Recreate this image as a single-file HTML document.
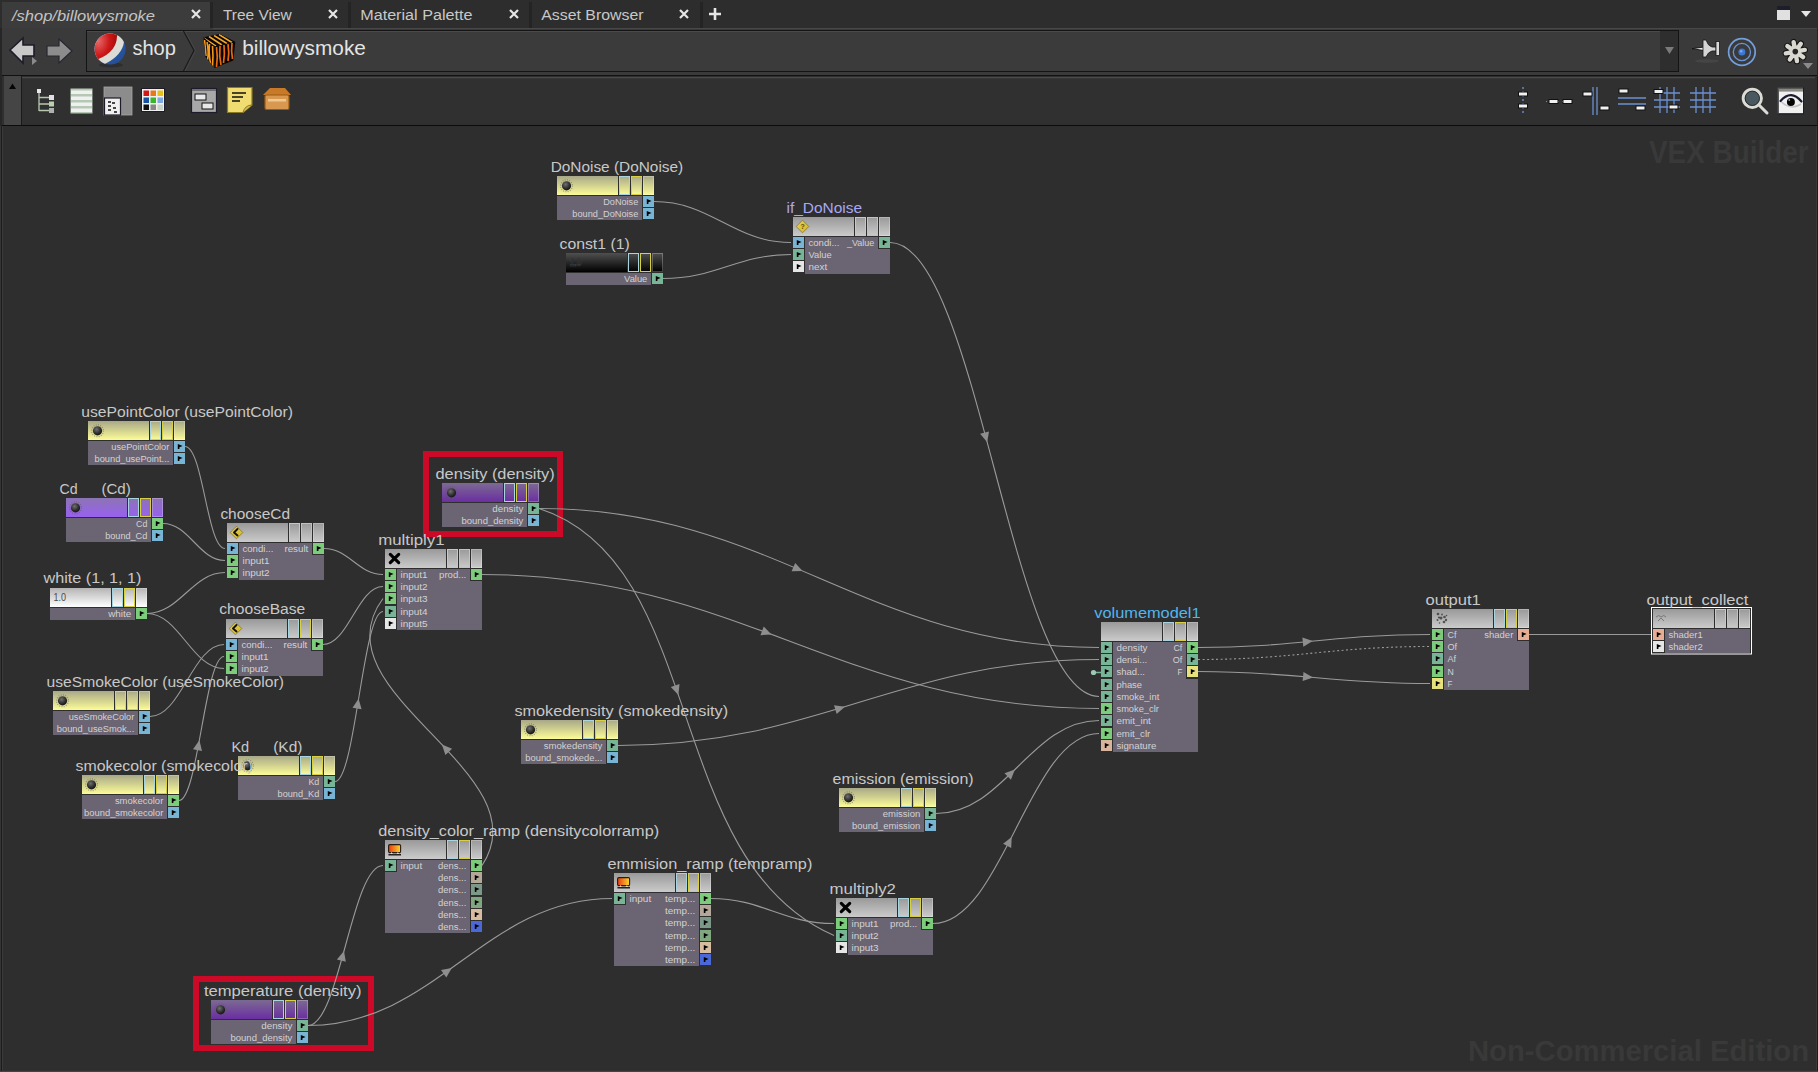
<!DOCTYPE html>
<html><head><meta charset="utf-8"><style>
html,body{margin:0;padding:0;background:#252525;overflow:hidden}
svg{display:block}
</style></head><body>
<svg width="1818" height="1072" viewBox="0 0 1818 1072">
<defs><linearGradient id="h_yellow" x1="0" y1="0" x2="0" y2="1"><stop offset="0" stop-color="#a8a888"/><stop offset="1" stop-color="#fcfc98"/></linearGradient><linearGradient id="h_gray" x1="0" y1="0" x2="0" y2="1"><stop offset="0" stop-color="#999999"/><stop offset="1" stop-color="#cbcbcb"/></linearGradient><linearGradient id="h_purple" x1="0" y1="0" x2="0" y2="1"><stop offset="0" stop-color="#8c74b4"/><stop offset="1" stop-color="#9860f0"/></linearGradient><linearGradient id="h_purple2" x1="0" y1="0" x2="0" y2="1"><stop offset="0" stop-color="#7c6a92"/><stop offset="1" stop-color="#6a2ea2"/></linearGradient><linearGradient id="h_white" x1="0" y1="0" x2="0" y2="1"><stop offset="0" stop-color="#b4b4b4"/><stop offset="1" stop-color="#ffffff"/></linearGradient><linearGradient id="h_black" x1="0" y1="0" x2="0" y2="1"><stop offset="0" stop-color="#505050"/><stop offset="1" stop-color="#000000"/></linearGradient><radialGradient id="gball" cx="0.4" cy="0.35" r="0.7"><stop offset="0" stop-color="#707070"/><stop offset="0.6" stop-color="#303030"/><stop offset="1" stop-color="#101010"/></radialGradient><linearGradient id="gramp" x1="0" y1="0" x2="1" y2="0"><stop offset="0" stop-color="#e83a10"/><stop offset="1" stop-color="#f8d830"/></linearGradient><linearGradient id="gdia" x1="0" y1="0" x2="1" y2="1"><stop offset="0" stop-color="#e0d060"/><stop offset="1" stop-color="#d8b818"/></linearGradient></defs>
<rect x="0" y="0" width="1818" height="1072" fill="#262626"/>
<rect x="0" y="0" width="1818" height="28" fill="#2d2d2d"/>
<rect x="2" y="2" width="208" height="26" fill="#3c3c3c"/>
<rect x="2" y="28" width="1815" height="47" fill="#3a3a3a"/>
<rect x="210" y="2" width="3" height="26" fill="#242424"/>
<rect x="348" y="2" width="3" height="26" fill="#242424"/>
<rect x="529" y="2" width="3" height="26" fill="#242424"/>
<rect x="700" y="2" width="3" height="26" fill="#242424"/>
<rect x="213" y="28" width="1604" height="1" fill="#484848"/>
<text x="12" y="21" textLength="143" lengthAdjust="spacingAndGlyphs" style="font-family:&quot;Liberation Sans&quot;,sans-serif;font-size:15px;font-style:italic" fill="#c4c4c4">/shop/billowysmoke</text>
<text x="222.9" y="20" textLength="68.8" lengthAdjust="spacingAndGlyphs" style="font-family:&quot;Liberation Sans&quot;,sans-serif;font-size:14px" fill="#c8c8c8">Tree View</text>
<text x="360.2" y="20" textLength="112.3" lengthAdjust="spacingAndGlyphs" style="font-family:&quot;Liberation Sans&quot;,sans-serif;font-size:14px" fill="#c8c8c8">Material Palette</text>
<text x="541.3" y="20" textLength="102.2" lengthAdjust="spacingAndGlyphs" style="font-family:&quot;Liberation Sans&quot;,sans-serif;font-size:14px" fill="#c8c8c8">Asset Browser</text>
<path d="M192,10 L200,18 M200,10 L192,18" stroke="#e6e6e6" stroke-width="2.2"/>
<path d="M329,10 L337,18 M337,10 L329,18" stroke="#e6e6e6" stroke-width="2.2"/>
<path d="M510,10 L518,18 M518,10 L510,18" stroke="#e6e6e6" stroke-width="2.2"/>
<path d="M680,10 L688,18 M688,10 L680,18" stroke="#e6e6e6" stroke-width="2.2"/>
<path d="M715,8 v12 M709,14 h12" stroke="#e6e6e6" stroke-width="2.6"/>
<rect x="1777" y="6" width="13" height="4" fill="#1e1e2a"/><rect x="1777" y="10" width="13" height="10" fill="#e0e0e0"/>
<path d="M1801,11 h10 l-5,6 Z" fill="#e6e6e6"/>
<path d="M10,50 L23,38 V45 H34 V56 H23 V63 Z" fill="#c8c8c8" stroke="#1c1c2a" stroke-width="1.6"/>
<path d="M32,57 l5,4 l-5,4 Z" fill="#8a8a8a"/>
<path d="M72,51 L59,39 V46 H47 V56 H59 V63 Z" fill="#8c8c8c" stroke="#262630" stroke-width="1.2"/>
<rect x="86.5" y="30.5" width="1592" height="41" fill="#3b3b3b" stroke="#141414" stroke-width="1"/>
<rect x="87" y="31" width="1591" height="1" fill="#4a4a4a"/>
<rect x="1660" y="31" width="18" height="40" fill="#2e2e2e"/>
<path d="M1665,47 h9 l-4.5,7 Z" fill="#7a7a7a"/>
<defs><clipPath id="cb"><circle cx="110.1" cy="49" r="15.5"/></clipPath><radialGradient id="gred" cx="0.3" cy="0.35" r="0.7"><stop offset="0" stop-color="#e86a6a"/><stop offset="0.6" stop-color="#cc1818"/><stop offset="1" stop-color="#a80c0c"/></radialGradient><linearGradient id="gblue" x1="0" y1="0" x2="1" y2="1"><stop offset="0" stop-color="#3a6ab8"/><stop offset="1" stop-color="#1e4890"/></linearGradient></defs>
<ellipse cx="111" cy="65" rx="12" ry="2.5" fill="#2e2e2e"/>
<g clip-path="url(#cb)"><rect x="94" y="33" width="33" height="33" fill="url(#gblue)"/><path d="M90,28 H124 V42 Q122.15,55 105.7,63.6 L90,70 Z" fill="#dcdcd6"/><path d="M90,28 H117 V36 Q116.8,51.45 99,58.7 L90,64 Z" fill="url(#gred)"/></g>
<text x="132.4" y="55" textLength="43.5" lengthAdjust="spacingAndGlyphs" style="font-family:&quot;Liberation Sans&quot;,sans-serif;font-size:21px" fill="#e4e4e4">shop</text>
<path d="M183.5,31 L194,50.5 L183.5,71" fill="none" stroke="#1a1a1a" stroke-width="1.2"/>
<path d="M185,31 L195.5,50.5 L185,71" fill="none" stroke="#4a4a4a" stroke-width="0.8"/>
<defs><clipPath id="ctl"><polygon points="203.5,37.3 214.1,46.5 214.5,68 205.5,57"/></clipPath><clipPath id="ctr"><polygon points="214.1,46.5 235.3,41.8 233.3,60.6 214.5,68"/></clipPath><clipPath id="ctt"><polygon points="203.5,37.3 220,33.9 235.3,41.8 214.1,46.5"/></clipPath></defs>
<polygon points="203.5,37.3 220,33.9 235.3,41.8 214.1,46.5" fill="#0a0604"/><polygon points="203.5,37.3 214.1,46.5 214.5,68 205.5,57" fill="#0a0604"/><polygon points="214.1,46.5 235.3,41.8 233.3,60.6 214.5,68" fill="#0a0604"/>
<g clip-path="url(#ctl)" stroke="#f49a1c" stroke-width="1.6" fill="none"><path d="M204.5,40 q1,8 1.5,16 M207,42 q2,10 0.5,18 M209.5,44 q-1,8 1,20 M212.5,46 q1,10 0,21"/></g>
<g clip-path="url(#ctr)" stroke="#e86a10" stroke-width="1.7" fill="none"><path d="M216.5,47 q1.5,10 0,20 M220,46 q-1,10 1,19 M224,45 q1,9 -0.5,18 M228,44 q1.5,9 0,17 M232,43 q-1,8 0.5,16"/></g>
<g clip-path="url(#ctt)" stroke="#f4a828" stroke-width="1.5" fill="none"><path d="M204,38 l12,8 M209,36.5 l13,8.5 M214,35.5 l13,8 M219,34.5 l13,8"/></g>
<text x="242.2" y="55" textLength="123.7" lengthAdjust="spacingAndGlyphs" style="font-family:&quot;Liberation Sans&quot;,sans-serif;font-size:21px" fill="#e4e4e4">billowysmoke</text>
<path d="M1692,48.7 L1704,47 L1704,50.5 Z" fill="#e8e8e8" stroke="#111" stroke-width="0.9" stroke-linejoin="round"/>
<path d="M1703,40 L1706,40 Q1708,46 1712,47 L1716,47 L1716,51 L1712,51 Q1708,52 1706,57 L1703,57 Z" fill="#d4d4d4" stroke="#181818" stroke-width="0.8"/>
<rect x="1716" y="41.5" width="3.5" height="14" fill="#dadada" stroke="#181818" stroke-width="0.8"/>
<ellipse cx="1707" cy="61" rx="12" ry="1.8" fill="#4a4a4a" opacity="0.7"/>
<circle cx="1741.9" cy="52" r="13.3" fill="none" stroke="#74a0dc" stroke-width="1.7"/>
<circle cx="1741.9" cy="52" r="8.6" fill="none" stroke="#6a94d4" stroke-width="1.3"/>
<circle cx="1741.9" cy="52" r="3.5" fill="#3a78d8"/><circle cx="1741.2" cy="51.2" r="1.3" fill="#7aa8f0"/>
<path d="M1795.3,51.6 L1793.6,42.1 M1795.3,51.6 L1800.8,43.7 M1795.3,51.6 L1804.8,49.9 M1795.3,51.6 L1803.2,57.1 M1795.3,51.6 L1797.0,61.1 M1795.3,51.6 L1789.8,59.5 M1795.3,51.6 L1785.8,53.3 M1795.3,51.6 L1787.4,46.1" stroke="#141414" stroke-width="6.4" stroke-linecap="round"/>
<circle cx="1795.3" cy="51.6" r="7.2" fill="#141414"/>
<path d="M1795.3,51.6 L1793.6,42.1 M1795.3,51.6 L1800.8,43.7 M1795.3,51.6 L1804.8,49.9 M1795.3,51.6 L1803.2,57.1 M1795.3,51.6 L1797.0,61.1 M1795.3,51.6 L1789.8,59.5 M1795.3,51.6 L1785.8,53.3 M1795.3,51.6 L1787.4,46.1" stroke="#d8d8d0" stroke-width="4.4" stroke-linecap="round"/>
<circle cx="1795.3" cy="51.6" r="6" fill="#d8d8d0"/>
<circle cx="1795.3" cy="51.6" r="2.8" fill="#262626"/>
<path d="M1803,63 h10 l-5,6 Z" fill="#8a8a8a"/>
<rect x="2" y="75" width="1815" height="1" fill="#111111"/>
<rect x="2" y="76" width="1815" height="49" fill="#2f2f2f"/>
<rect x="4" y="76" width="17" height="49" fill="#454545"/>
<rect x="21" y="76" width="1" height="49" fill="#1a1a1a"/>
<rect x="22" y="77" width="1793" height="1.5" fill="#4a4a4a"/>
<rect x="22" y="78.5" width="1793" height="46" fill="#303030"/>
<path d="M9,89 h7 l-3.5,-5.5 Z" fill="#050505"/>
<rect x="2" y="125" width="1815" height="1" fill="#0c0c0c"/>
<rect x="37" y="89" width="4" height="4" fill="#e8e8e8"/><path d="M39,93 V111 M39,97.5 H49 M39,104 H49 M39,110.5 H49" stroke="#b8c8b0" stroke-width="1.3"/>
<rect x="49" y="95" width="5" height="5" fill="#e0e0e0"/><rect x="49" y="101.5" width="5" height="5" fill="#b8d0b0"/><rect x="49" y="108" width="5" height="5" fill="#b0b0b0"/>
<rect x="70.5" y="88.5" width="22" height="25" fill="#b4c8b4"/>
<rect x="71" y="90.5" width="21" height="3.5" fill="#f0f0f0"/>
<rect x="71" y="96.5" width="21" height="3.5" fill="#f0f0f0"/>
<rect x="71" y="102.5" width="21" height="3.5" fill="#f0f0f0"/>
<rect x="71" y="108.5" width="21" height="3.5" fill="#f0f0f0"/>
<rect x="104" y="87" width="28" height="28" fill="#8c8c8c"/><rect x="104" y="87" width="28" height="28" fill="none" stroke="#a0a8a0" stroke-width="0.8"/>
<rect x="104.5" y="98" width="16" height="17" fill="#f0f0f0" stroke="#1c1c2a" stroke-width="1.2"/>
<path d="M108,102 h3 M112,103 h3 M108,106 h3 M113,108 h3 M108,110 h3 M114,112 h3" stroke="#101010" stroke-width="1.4"/>
<rect x="141.5" y="88.5" width="23" height="23" fill="#f0f0f0" stroke="#1c1c2a" stroke-width="1"/>
<rect x="143.5" y="90.5" width="5.5" height="5.5" fill="#d01818"/>
<rect x="150.5" y="90.5" width="5.5" height="5.5" fill="#e87818"/>
<rect x="157.5" y="90.5" width="5.5" height="5.5" fill="#e8c018"/>
<rect x="143.5" y="97.5" width="5.5" height="5.5" fill="#1850a0"/>
<rect x="150.5" y="97.5" width="5.5" height="5.5" fill="#38b828"/>
<rect x="157.5" y="97.5" width="5.5" height="5.5" fill="#80a8e0"/>
<rect x="143.5" y="104.5" width="5.5" height="5.5" fill="#101010"/>
<rect x="150.5" y="104.5" width="5.5" height="5.5" fill="#888888"/>
<rect x="157.5" y="104.5" width="5.5" height="5.5" fill="#c8d4c8"/>
<rect x="191.5" y="88.5" width="25" height="24" fill="#a8a8a8" stroke="#1c1c2a" stroke-width="1.2"/><rect x="192" y="89" width="24" height="2" fill="#707070"/>
<rect x="195" y="94" width="11" height="6" fill="#e8e8e8" stroke="#101010" stroke-width="1"/><rect x="202" y="103" width="11" height="6" fill="#e8e8e8" stroke="#101010" stroke-width="1"/>
<path d="M227.5,87.5 H252 V105 L243,112.5 H227.5 Z" fill="#f0dc70" stroke="#8a7a20" stroke-width="1.2"/>
<path d="M243,112.5 Q245,105 252,105" fill="#d8c050" stroke="#8a7a20" stroke-width="1"/>
<path d="M232,93 h14 M232,97 h11 M232,101 h8" stroke="#101010" stroke-width="1.6"/>
<path d="M263,95 L270,88 H285 L291,95 Z" fill="#c87a28"/><rect x="265" y="95" width="24" height="14.5" rx="1.5" fill="#d89850" stroke="#9a5a10" stroke-width="1.2"/>
<rect x="268" y="99" width="18" height="2.5" fill="#f0c890"/>
<path d="M1523,87 V115" stroke="#6a90d0" stroke-width="1.4" stroke-dasharray="2 2"/><rect x="1518.5" y="92" width="9" height="4" fill="#f0f0f0" stroke="#101010" stroke-width="1"/><rect x="1518.5" y="104" width="9" height="4" fill="#f0f0f0" stroke="#101010" stroke-width="1"/>
<path d="M1546,101.5 H1574" stroke="#6a90d0" stroke-width="1.2" stroke-dasharray="1 3"/><rect x="1549" y="99.5" width="9" height="4" fill="#f0f0f0" stroke="#101010" stroke-width="1"/><rect x="1563" y="99.5" width="9" height="4" fill="#f0f0f0" stroke="#101010" stroke-width="1"/>
<path d="M1593,87 V115 M1597,87 V115" stroke="#6a90d0" stroke-width="1.3"/><rect x="1583" y="92" width="9" height="4" fill="#f0f0f0" stroke="#101010" stroke-width="1"/><rect x="1600" y="106" width="9" height="4" fill="#f0f0f0" stroke="#101010" stroke-width="1"/>
<path d="M1618,98 H1646 M1618,104 H1646" stroke="#6a90d0" stroke-width="1.3"/><rect x="1619" y="89" width="9" height="4" fill="#f0f0f0" stroke="#101010" stroke-width="1"/><rect x="1636" y="106" width="9" height="4" fill="#f0f0f0" stroke="#101010" stroke-width="1"/>
<path d="M1660,87 V113 M1667,87 V113 M1674,87 V113 M1654,93 H1680 M1654,100 H1680 M1654,107 H1680" stroke="#6a90d0" stroke-width="1.3"/><rect x="1654" y="89.5" width="9" height="4" fill="#f0f0f0" stroke="#101010" stroke-width="1"/><rect x="1669" y="105" width="9" height="4" fill="#f0f0f0" stroke="#101010" stroke-width="1"/>
<path d="M1696,87 V113 M1703,87 V113 M1710,87 V113 M1690,93 H1716 M1690,100 H1716 M1690,107 H1716" stroke="#6a90d0" stroke-width="1.3"/>
<circle cx="1752.3" cy="98.3" r="9" fill="#4a5860" stroke="#dcdcd6" stroke-width="3.2"/><circle cx="1752.3" cy="98.3" r="7.2" fill="none" stroke="#1e1e1e" stroke-width="0.9"/>
<path d="M1759.5,105.5 L1767,113" stroke="#dcdcd6" stroke-width="3" stroke-linecap="round"/>
<rect x="1777.5" y="87.5" width="26.5" height="27" fill="#1c1c2a"/><rect x="1777.5" y="87.5" width="25.5" height="26" fill="#5a5a5a"/>
<rect x="1779" y="89" width="24" height="24" fill="#f0f0f0"/><rect x="1779" y="89" width="24" height="2.6" fill="#8a8a84"/>
<path d="M1781,101.5 Q1791,111 1801,104" fill="none" stroke="#c4c4c4" stroke-width="1.6"/>
<path d="M1780.5,101 Q1791,89 1801.5,101.5" fill="none" stroke="#1c1c30" stroke-width="2.2" stroke-linecap="round"/>
<circle cx="1790.9" cy="101.9" r="4" fill="#050505"/><circle cx="1789.3" cy="100" r="0.9" fill="#a0a0a0"/>
<rect x="0" y="126" width="1818" height="946" fill="#353535"/>
<rect x="1" y="126" width="1" height="945" fill="#1c1c1c"/>
<rect x="2" y="126" width="1" height="945" fill="#3a3a3a"/>
<rect x="1817" y="76" width="1" height="996" fill="#1c1c1c"/>
<rect x="1816" y="126" width="1" height="945" fill="#3a3a3a"/>
<rect x="0" y="1071" width="1818" height="1" fill="#444444"/>
<rect x="3" y="126" width="1813" height="944.5" fill="#2e2e2e"/>
<text x="1649" y="163" textLength="159.5" lengthAdjust="spacingAndGlyphs" style="font-family:&quot;Liberation Sans&quot;,sans-serif;font-size:31px;font-weight:bold" fill="#393939">VEX Builder</text>
<text x="1468" y="1060.5" textLength="341" lengthAdjust="spacingAndGlyphs" style="font-family:&quot;Liberation Sans&quot;,sans-serif;font-size:29px;font-weight:bold" fill="#393939">Non-Commercial Edition</text>
<rect x="426" y="454" width="134" height="80" fill="none" stroke="#cc0a28" stroke-width="6"/>
<rect x="196" y="979" width="175" height="69" fill="none" stroke="#cc0a28" stroke-width="6"/>
<path d="M654.0,201.5 C711.5,201.5 733.5,242.5 791.0,242.5" fill="none" stroke="#9a9a9a" stroke-width="1.1"/>
<path d="M663.0,278.5 C716.8,278.5 737.2,254.5 791.0,254.5" fill="none" stroke="#9a9a9a" stroke-width="1.1"/>
<path d="M890.0,242.5 C977.8,242.5 1011.2,696.5 1099.0,696.5" fill="none" stroke="#9a9a9a" stroke-width="1.1"/>
<path d="M987.2,442.2 L980.1,433.8 L989.0,431.4 Z" fill="#8e8e8e"/>
<path d="M185.0,446.5 C203.0,446.5 207.0,548.5 225.0,548.5" fill="none" stroke="#9a9a9a" stroke-width="1.1"/>
<path d="M163.0,523.5 C189.0,523.5 199.0,560.5 225.0,560.5" fill="none" stroke="#9a9a9a" stroke-width="1.1"/>
<path d="M147.0,613.5 C179.8,613.5 192.2,572.5 225.0,572.5" fill="none" stroke="#9a9a9a" stroke-width="1.1"/>
<path d="M147.0,613.5 C179.3,613.5 191.7,668.5 224.0,668.5" fill="none" stroke="#9a9a9a" stroke-width="1.1"/>
<path d="M150.0,716.5 C181.1,716.5 192.9,644.5 224.0,644.5" fill="none" stroke="#9a9a9a" stroke-width="1.1"/>
<path d="M179.0,800.5 C197.9,800.5 205.1,656.5 224.0,656.5" fill="none" stroke="#9a9a9a" stroke-width="1.1"/>
<path d="M199.4,740.2 L202.0,750.9 L193.0,749.2 Z" fill="#8e8e8e"/>
<path d="M324.0,548.5 C348.8,548.5 358.2,574.5 383.0,574.5" fill="none" stroke="#9a9a9a" stroke-width="1.1"/>
<path d="M323.0,644.5 C348.2,644.5 357.8,586.5 383.0,586.5" fill="none" stroke="#9a9a9a" stroke-width="1.1"/>
<path d="M335.0,781.5 C355.2,781.5 362.8,611.5 383.0,611.5" fill="none" stroke="#9a9a9a" stroke-width="1.1"/>
<path d="M358.6,698.7 L361.6,709.3 L352.5,707.8 Z" fill="#8e8e8e"/>
<path d="M482.0,865.5 C545.0,771.5 313.0,692.5 383.0,598.5" fill="none" stroke="#9a9a9a" stroke-width="1.1"/>
<path d="M441.9,744.6 L452.1,748.8 L445.4,755.0 Z" fill="#8e8e8e"/>
<path d="M482.0,574.5 C741.1,574.5 839.9,708.5 1099.0,708.5" fill="none" stroke="#9a9a9a" stroke-width="1.1"/>
<path d="M771.5,634.4 L760.5,635.2 L763.7,626.6 Z" fill="#8e8e8e"/>
<path d="M539.0,508.5 C774.2,508.5 863.8,647.5 1099.0,647.5" fill="none" stroke="#9a9a9a" stroke-width="1.1"/>
<path d="M802.6,571.0 L791.6,571.3 L795.2,562.9 Z" fill="#8e8e8e"/>
<path d="M539.0,508.5 C708.0,562.5 661.0,860.5 834.0,935.5" fill="none" stroke="#9a9a9a" stroke-width="1.1"/>
<path d="M678.4,695.0 L670.8,687.0 L679.5,684.0 Z" fill="#8e8e8e"/>
<path d="M618.0,745.5 C820.0,745.5 897.0,659.5 1099.0,659.5" fill="none" stroke="#9a9a9a" stroke-width="1.1"/>
<path d="M844.9,706.7 L836.7,714.0 L834.0,705.2 Z" fill="#8e8e8e"/>
<path d="M308.0,1025.5 C339.5,1025.5 351.5,865.5 383.0,865.5" fill="none" stroke="#9a9a9a" stroke-width="1.1"/>
<path d="M344.0,951.0 L345.8,961.8 L336.9,959.4 Z" fill="#8e8e8e"/>
<path d="M308.0,1025.5 C435.7,1025.5 484.3,898.5 612.0,898.5" fill="none" stroke="#9a9a9a" stroke-width="1.1"/>
<path d="M451.8,967.9 L446.3,977.5 L441.0,970.0 Z" fill="#8e8e8e"/>
<path d="M711.0,898.5 C762.7,898.5 782.3,923.5 834.0,923.5" fill="none" stroke="#9a9a9a" stroke-width="1.1"/>
<path d="M933.0,923.5 C1002.7,923.5 1029.3,733.5 1099.0,733.5" fill="none" stroke="#9a9a9a" stroke-width="1.1"/>
<path d="M1011.7,837.0 L1011.2,848.0 L1003.1,843.8 Z" fill="#8e8e8e"/>
<path d="M936.0,813.5 C1004.5,813.5 1030.5,720.5 1099.0,720.5" fill="none" stroke="#9a9a9a" stroke-width="1.1"/>
<path d="M1014.9,769.6 L1010.9,779.8 L1004.5,773.2 Z" fill="#8e8e8e"/>
<path d="M1198.0,647.5 C1295.4,647.5 1332.6,634.5 1430.0,634.5" fill="none" stroke="#9a9a9a" stroke-width="1.1"/>
<path d="M1312.8,641.1 L1303.3,646.7 L1302.4,637.5 Z" fill="#8e8e8e"/>
<path d="M1198.0,659.5 C1295.4,659.5 1332.6,646.5 1430.0,646.5" fill="none" stroke="#9a9a9a" stroke-width="1.1" stroke-dasharray="2 2.5"/>
<path d="M1198.0,671.5 C1295.4,671.5 1332.6,683.5 1430.0,683.5" fill="none" stroke="#9a9a9a" stroke-width="1.1"/>
<path d="M1313.0,677.4 L1302.6,681.1 L1303.5,671.9 Z" fill="#8e8e8e"/>
<path d="M1529.0,634.5 C1580.2,634.5 1599.8,634.5 1651.0,634.5" fill="none" stroke="#9a9a9a" stroke-width="1.1"/>
<rect x="557" y="176" width="61" height="19" fill="url(#h_yellow)"/>
<rect x="619" y="176" width="11" height="19" fill="url(#h_yellow)"/>
<rect x="619.5" y="176.5" width="10" height="18" fill="none" stroke="#a8d4e0" stroke-width="1"/>
<rect x="631" y="176" width="11" height="19" fill="url(#h_yellow)"/>
<rect x="631.5" y="176.5" width="10" height="18" fill="none" stroke="#d8d040" stroke-width="1"/>
<rect x="643" y="176" width="11" height="19" fill="url(#h_yellow)"/>
<rect x="643.5" y="176.5" width="10" height="18" fill="none" stroke="#ffffff" stroke-opacity="0.25" stroke-width="1"/>
<g><circle cx="566.5" cy="185.8" r="5.9" fill="none" stroke="#5a5a50" stroke-width="1.2" stroke-dasharray="0.9 1.4" opacity="0.55"/><circle cx="566.5" cy="185.8" r="4.6" fill="url(#gball)"/></g>
<rect x="557" y="196" width="85" height="12" fill="#6b6573"/>
<rect x="643" y="196" width="11" height="11" fill="#78b4d4"/><path d="M646.8,199 L651.6,200.9 L648.4,202.3 L648.4,204 L646.8,204 Z" fill="#000"/>
<text x="603.2" y="204.6" textLength="35.1" lengthAdjust="spacingAndGlyphs" style="font-family:&quot;Liberation Sans&quot;,sans-serif;font-size:9.6px" fill="#d2d2d2">DoNoise</text>
<rect x="557" y="208" width="85" height="12" fill="#6b6573"/>
<rect x="643" y="208" width="11" height="11" fill="#78b4d4"/><path d="M646.8,211 L651.6,212.9 L648.4,214.3 L648.4,216 L646.8,216 Z" fill="#000"/>
<text x="572.3" y="216.6" textLength="66.0" lengthAdjust="spacingAndGlyphs" style="font-family:&quot;Liberation Sans&quot;,sans-serif;font-size:9.6px" fill="#d2d2d2">bound_DoNoise</text>
<rect x="566" y="253" width="61" height="19" fill="url(#h_black)"/>
<rect x="628" y="253" width="11" height="19" fill="url(#h_black)"/>
<rect x="628.5" y="253.5" width="10" height="18" fill="none" stroke="#a8d4e0" stroke-width="1"/>
<rect x="640" y="253" width="11" height="19" fill="url(#h_black)"/>
<rect x="640.5" y="253.5" width="10" height="18" fill="none" stroke="#d8d040" stroke-width="1"/>
<rect x="652" y="253" width="11" height="19" fill="url(#h_black)"/>
<rect x="652.5" y="253.5" width="10" height="18" fill="none" stroke="#ffffff" stroke-opacity="0.25" stroke-width="1"/>
<text x="569.5" y="266" textLength="12" lengthAdjust="spacingAndGlyphs" style="font-family:&quot;Liberation Sans&quot;,sans-serif;font-size:10.5px;font-weight:bold" fill="#1a1a1a" stroke="#4a4a4a" stroke-width="0.5">1.0</text>
<rect x="566" y="273" width="85" height="12" fill="#6b6573"/>
<rect x="652" y="273" width="11" height="11" fill="#78b496"/><path d="M655.8,276 L660.6,277.9 L657.4,279.3 L657.4,281 L655.8,281 Z" fill="#000"/>
<text x="624.1" y="281.6" textLength="23.2" lengthAdjust="spacingAndGlyphs" style="font-family:&quot;Liberation Sans&quot;,sans-serif;font-size:9.6px" fill="#d2d2d2">Value</text>
<rect x="793" y="217" width="61" height="19" fill="url(#h_gray)"/>
<rect x="855" y="217" width="11" height="19" fill="url(#h_gray)"/>
<rect x="855.5" y="217.5" width="10" height="18" fill="none" stroke="#a8d4e0" stroke-width="1"/>
<rect x="867" y="217" width="11" height="19" fill="url(#h_gray)"/>
<rect x="867.5" y="217.5" width="10" height="18" fill="none" stroke="#d8d040" stroke-width="1"/>
<rect x="879" y="217" width="11" height="19" fill="url(#h_gray)"/>
<rect x="879.5" y="217.5" width="10" height="18" fill="none" stroke="#ffffff" stroke-opacity="0.25" stroke-width="1"/>
<path d="M802.5,220.2 L808.8,226.5 L802.5,232.8 L796.2,226.5 Z" fill="url(#gdia)" stroke="#7a6a30" stroke-width="0.7" stroke-linejoin="round"/><text x="800.5" y="229.0" style="font-family:&quot;Liberation Sans&quot;,sans-serif;font-size:7px;font-weight:bold" fill="#5a4a10">?</text>
<rect x="805" y="237" width="73" height="12" fill="#6b6573"/>
<rect x="793" y="237" width="11" height="11" fill="#78b4d4"/><path d="M796.8,240 L801.6,241.9 L798.4,243.3 L798.4,245 L796.8,245 Z" fill="#000"/>
<text x="808.5" y="245.6" textLength="30.9" lengthAdjust="spacingAndGlyphs" style="font-family:&quot;Liberation Sans&quot;,sans-serif;font-size:9.6px" fill="#d2d2d2">condi...</text>
<rect x="879" y="237" width="11" height="11" fill="#78b496"/><path d="M882.8,240 L887.6,241.9 L884.4,243.3 L884.4,245 L882.8,245 Z" fill="#000"/>
<text x="846.9" y="245.6" textLength="27.4" lengthAdjust="spacingAndGlyphs" style="font-family:&quot;Liberation Sans&quot;,sans-serif;font-size:9.6px" fill="#d2d2d2">_Value</text>
<rect x="805" y="249" width="85" height="12" fill="#6b6573"/>
<rect x="793" y="249" width="11" height="11" fill="#78b496"/><path d="M796.8,252 L801.6,253.9 L798.4,255.3 L798.4,257 L796.8,257 Z" fill="#000"/>
<text x="808.5" y="257.6" textLength="23.2" lengthAdjust="spacingAndGlyphs" style="font-family:&quot;Liberation Sans&quot;,sans-serif;font-size:9.6px" fill="#d2d2d2">Value</text>
<rect x="805" y="261" width="85" height="13" fill="#6b6573"/>
<rect x="793" y="261" width="11" height="11" fill="#e6e6e6"/><path d="M796.8,264 L801.6,265.9 L798.4,267.3 L798.4,269 L796.8,269 Z" fill="#000"/>
<text x="808.5" y="269.6" textLength="18.7" lengthAdjust="spacingAndGlyphs" style="font-family:&quot;Liberation Sans&quot;,sans-serif;font-size:9.6px" fill="#d2d2d2">next</text>
<rect x="88" y="421" width="61" height="19" fill="url(#h_yellow)"/>
<rect x="150" y="421" width="11" height="19" fill="url(#h_yellow)"/>
<rect x="150.5" y="421.5" width="10" height="18" fill="none" stroke="#a8d4e0" stroke-width="1"/>
<rect x="162" y="421" width="11" height="19" fill="url(#h_yellow)"/>
<rect x="162.5" y="421.5" width="10" height="18" fill="none" stroke="#d8d040" stroke-width="1"/>
<rect x="174" y="421" width="11" height="19" fill="url(#h_yellow)"/>
<rect x="174.5" y="421.5" width="10" height="18" fill="none" stroke="#ffffff" stroke-opacity="0.25" stroke-width="1"/>
<g><circle cx="97.5" cy="430.8" r="5.9" fill="none" stroke="#5a5a50" stroke-width="1.2" stroke-dasharray="0.9 1.4" opacity="0.55"/><circle cx="97.5" cy="430.8" r="4.6" fill="url(#gball)"/></g>
<rect x="88" y="441" width="85" height="12" fill="#6b6573"/>
<rect x="174" y="441" width="11" height="11" fill="#78b4d4"/><path d="M177.8,444 L182.6,445.9 L179.4,447.3 L179.4,449 L177.8,449 Z" fill="#000"/>
<text x="111.3" y="449.6" textLength="58.0" lengthAdjust="spacingAndGlyphs" style="font-family:&quot;Liberation Sans&quot;,sans-serif;font-size:9.6px" fill="#d2d2d2">usePointColor</text>
<rect x="88" y="453" width="85" height="12" fill="#6b6573"/>
<rect x="174" y="453" width="11" height="11" fill="#78b4d4"/><path d="M177.8,456 L182.6,457.9 L179.4,459.3 L179.4,461 L177.8,461 Z" fill="#000"/>
<text x="94.5" y="461.6" textLength="74.8" lengthAdjust="spacingAndGlyphs" style="font-family:&quot;Liberation Sans&quot;,sans-serif;font-size:9.6px" fill="#d2d2d2">bound_usePoint...</text>
<rect x="66" y="498" width="61" height="19" fill="url(#h_purple)"/>
<rect x="128" y="498" width="11" height="19" fill="url(#h_purple)"/>
<rect x="128.5" y="498.5" width="10" height="18" fill="none" stroke="#a8d4e0" stroke-width="1"/>
<rect x="140" y="498" width="11" height="19" fill="url(#h_purple)"/>
<rect x="140.5" y="498.5" width="10" height="18" fill="none" stroke="#d8d040" stroke-width="1"/>
<rect x="152" y="498" width="11" height="19" fill="url(#h_purple)"/>
<rect x="152.5" y="498.5" width="10" height="18" fill="none" stroke="#ffffff" stroke-opacity="0.25" stroke-width="1"/>
<g><circle cx="75.5" cy="507.8" r="5.9" fill="none" stroke="#5a5a50" stroke-width="1.2" stroke-dasharray="0.9 1.4" opacity="0.55"/><circle cx="75.5" cy="507.8" r="4.6" fill="url(#gball)"/></g>
<rect x="66" y="518" width="85" height="12" fill="#6b6573"/>
<rect x="152" y="518" width="11" height="11" fill="#7ccc7c"/><path d="M155.8,521 L160.6,522.9 L157.4,524.3 L157.4,526 L155.8,526 Z" fill="#000"/>
<text x="136.0" y="526.6" textLength="11.3" lengthAdjust="spacingAndGlyphs" style="font-family:&quot;Liberation Sans&quot;,sans-serif;font-size:9.6px" fill="#d2d2d2">Cd</text>
<rect x="66" y="530" width="85" height="12" fill="#6b6573"/>
<rect x="152" y="530" width="11" height="11" fill="#78b4d4"/><path d="M155.8,533 L160.6,534.9 L157.4,536.3 L157.4,538 L155.8,538 Z" fill="#000"/>
<text x="105.2" y="538.6" textLength="42.1" lengthAdjust="spacingAndGlyphs" style="font-family:&quot;Liberation Sans&quot;,sans-serif;font-size:9.6px" fill="#d2d2d2">bound_Cd</text>
<rect x="227" y="523" width="61" height="19" fill="url(#h_gray)"/>
<rect x="289" y="523" width="11" height="19" fill="url(#h_gray)"/>
<rect x="289.5" y="523.5" width="10" height="18" fill="none" stroke="#a8d4e0" stroke-width="1"/>
<rect x="301" y="523" width="11" height="19" fill="url(#h_gray)"/>
<rect x="301.5" y="523.5" width="10" height="18" fill="none" stroke="#d8d040" stroke-width="1"/>
<rect x="313" y="523" width="11" height="19" fill="url(#h_gray)"/>
<rect x="313.5" y="523.5" width="10" height="18" fill="none" stroke="#ffffff" stroke-opacity="0.25" stroke-width="1"/>
<path d="M236.5,526.2 L242.8,532.5 L236.5,538.8 L230.2,532.5 Z" fill="url(#gdia)" stroke="#7a6a30" stroke-width="0.7" stroke-linejoin="round"/><path d="M237.5,529.0 L234.0,532.5 L237.5,535.5" fill="none" stroke="#111" stroke-width="1.9" stroke-linecap="round" stroke-linejoin="round"/>
<rect x="239" y="543" width="73" height="12" fill="#6b6573"/>
<rect x="227" y="543" width="11" height="11" fill="#78b4d4"/><path d="M230.8,546 L235.6,547.9 L232.4,549.3 L232.4,551 L230.8,551 Z" fill="#000"/>
<text x="242.5" y="551.6" textLength="30.9" lengthAdjust="spacingAndGlyphs" style="font-family:&quot;Liberation Sans&quot;,sans-serif;font-size:9.6px" fill="#d2d2d2">condi...</text>
<rect x="313" y="543" width="11" height="11" fill="#7ccc7c"/><path d="M316.8,546 L321.6,547.9 L318.4,549.3 L318.4,551 L316.8,551 Z" fill="#000"/>
<text x="284.4" y="551.6" textLength="23.9" lengthAdjust="spacingAndGlyphs" style="font-family:&quot;Liberation Sans&quot;,sans-serif;font-size:9.6px" fill="#d2d2d2">result</text>
<rect x="239" y="555" width="85" height="12" fill="#6b6573"/>
<rect x="227" y="555" width="11" height="11" fill="#7ccc7c"/><path d="M230.8,558 L235.6,559.9 L232.4,561.3 L232.4,563 L230.8,563 Z" fill="#000"/>
<text x="242.5" y="563.6" textLength="27.1" lengthAdjust="spacingAndGlyphs" style="font-family:&quot;Liberation Sans&quot;,sans-serif;font-size:9.6px" fill="#d2d2d2">input1</text>
<rect x="239" y="567" width="85" height="13" fill="#6b6573"/>
<rect x="227" y="567" width="11" height="11" fill="#7ccc7c"/><path d="M230.8,570 L235.6,571.9 L232.4,573.3 L232.4,575 L230.8,575 Z" fill="#000"/>
<text x="242.5" y="575.6" textLength="27.1" lengthAdjust="spacingAndGlyphs" style="font-family:&quot;Liberation Sans&quot;,sans-serif;font-size:9.6px" fill="#d2d2d2">input2</text>
<rect x="50" y="588" width="61" height="19" fill="url(#h_white)"/>
<rect x="112" y="588" width="11" height="19" fill="url(#h_white)"/>
<rect x="112.5" y="588.5" width="10" height="18" fill="none" stroke="#a8d4e0" stroke-width="1"/>
<rect x="124" y="588" width="11" height="19" fill="url(#h_white)"/>
<rect x="124.5" y="588.5" width="10" height="18" fill="none" stroke="#d8d040" stroke-width="1"/>
<rect x="136" y="588" width="11" height="19" fill="url(#h_white)"/>
<rect x="136.5" y="588.5" width="10" height="18" fill="none" stroke="#ffffff" stroke-opacity="0.25" stroke-width="1"/>
<text x="53.5" y="601" textLength="12.5" lengthAdjust="spacingAndGlyphs" style="font-family:&quot;Liberation Sans&quot;,sans-serif;font-size:11px" fill="#4a4a4a">1.0</text>
<rect x="50" y="608" width="85" height="12" fill="#6b6573"/>
<rect x="136" y="608" width="11" height="11" fill="#7ccc7c"/><path d="M139.8,611 L144.6,612.9 L141.4,614.3 L141.4,616 L139.8,616 Z" fill="#000"/>
<text x="108.2" y="616.6" textLength="23.1" lengthAdjust="spacingAndGlyphs" style="font-family:&quot;Liberation Sans&quot;,sans-serif;font-size:9.6px" fill="#d2d2d2">white</text>
<rect x="226" y="619" width="61" height="19" fill="url(#h_gray)"/>
<rect x="288" y="619" width="11" height="19" fill="url(#h_gray)"/>
<rect x="288.5" y="619.5" width="10" height="18" fill="none" stroke="#a8d4e0" stroke-width="1"/>
<rect x="300" y="619" width="11" height="19" fill="url(#h_gray)"/>
<rect x="300.5" y="619.5" width="10" height="18" fill="none" stroke="#d8d040" stroke-width="1"/>
<rect x="312" y="619" width="11" height="19" fill="url(#h_gray)"/>
<rect x="312.5" y="619.5" width="10" height="18" fill="none" stroke="#ffffff" stroke-opacity="0.25" stroke-width="1"/>
<path d="M235.5,622.2 L241.8,628.5 L235.5,634.8 L229.2,628.5 Z" fill="url(#gdia)" stroke="#7a6a30" stroke-width="0.7" stroke-linejoin="round"/><path d="M236.5,625.0 L233.0,628.5 L236.5,631.5" fill="none" stroke="#111" stroke-width="1.9" stroke-linecap="round" stroke-linejoin="round"/>
<rect x="238" y="639" width="73" height="12" fill="#6b6573"/>
<rect x="226" y="639" width="11" height="11" fill="#78b4d4"/><path d="M229.8,642 L234.6,643.9 L231.4,645.3 L231.4,647 L229.8,647 Z" fill="#000"/>
<text x="241.5" y="647.6" textLength="30.9" lengthAdjust="spacingAndGlyphs" style="font-family:&quot;Liberation Sans&quot;,sans-serif;font-size:9.6px" fill="#d2d2d2">condi...</text>
<rect x="312" y="639" width="11" height="11" fill="#7ccc7c"/><path d="M315.8,642 L320.6,643.9 L317.4,645.3 L317.4,647 L315.8,647 Z" fill="#000"/>
<text x="283.4" y="647.6" textLength="23.9" lengthAdjust="spacingAndGlyphs" style="font-family:&quot;Liberation Sans&quot;,sans-serif;font-size:9.6px" fill="#d2d2d2">result</text>
<rect x="238" y="651" width="85" height="12" fill="#6b6573"/>
<rect x="226" y="651" width="11" height="11" fill="#7ccc7c"/><path d="M229.8,654 L234.6,655.9 L231.4,657.3 L231.4,659 L229.8,659 Z" fill="#000"/>
<text x="241.5" y="659.6" textLength="27.1" lengthAdjust="spacingAndGlyphs" style="font-family:&quot;Liberation Sans&quot;,sans-serif;font-size:9.6px" fill="#d2d2d2">input1</text>
<rect x="238" y="663" width="85" height="13" fill="#6b6573"/>
<rect x="226" y="663" width="11" height="11" fill="#7ccc7c"/><path d="M229.8,666 L234.6,667.9 L231.4,669.3 L231.4,671 L229.8,671 Z" fill="#000"/>
<text x="241.5" y="671.6" textLength="27.1" lengthAdjust="spacingAndGlyphs" style="font-family:&quot;Liberation Sans&quot;,sans-serif;font-size:9.6px" fill="#d2d2d2">input2</text>
<rect x="53" y="691" width="61" height="19" fill="url(#h_yellow)"/>
<rect x="115" y="691" width="11" height="19" fill="url(#h_yellow)"/>
<rect x="115.5" y="691.5" width="10" height="18" fill="none" stroke="#a8d4e0" stroke-width="1"/>
<rect x="127" y="691" width="11" height="19" fill="url(#h_yellow)"/>
<rect x="127.5" y="691.5" width="10" height="18" fill="none" stroke="#d8d040" stroke-width="1"/>
<rect x="139" y="691" width="11" height="19" fill="url(#h_yellow)"/>
<rect x="139.5" y="691.5" width="10" height="18" fill="none" stroke="#ffffff" stroke-opacity="0.25" stroke-width="1"/>
<g><circle cx="62.5" cy="700.8" r="5.9" fill="none" stroke="#5a5a50" stroke-width="1.2" stroke-dasharray="0.9 1.4" opacity="0.55"/><circle cx="62.5" cy="700.8" r="4.6" fill="url(#gball)"/></g>
<rect x="53" y="711" width="85" height="12" fill="#6b6573"/>
<rect x="139" y="711" width="11" height="11" fill="#78b4d4"/><path d="M142.8,714 L147.6,715.9 L144.4,717.3 L144.4,719 L142.8,719 Z" fill="#000"/>
<text x="68.7" y="719.6" textLength="65.6" lengthAdjust="spacingAndGlyphs" style="font-family:&quot;Liberation Sans&quot;,sans-serif;font-size:9.6px" fill="#d2d2d2">useSmokeColor</text>
<rect x="53" y="723" width="85" height="12" fill="#6b6573"/>
<rect x="139" y="723" width="11" height="11" fill="#78b4d4"/><path d="M142.8,726 L147.6,727.9 L144.4,729.3 L144.4,731 L142.8,731 Z" fill="#000"/>
<text x="56.8" y="731.6" textLength="77.5" lengthAdjust="spacingAndGlyphs" style="font-family:&quot;Liberation Sans&quot;,sans-serif;font-size:9.6px" fill="#d2d2d2">bound_useSmok...</text>
<rect x="82" y="775" width="61" height="19" fill="url(#h_yellow)"/>
<rect x="144" y="775" width="11" height="19" fill="url(#h_yellow)"/>
<rect x="144.5" y="775.5" width="10" height="18" fill="none" stroke="#a8d4e0" stroke-width="1"/>
<rect x="156" y="775" width="11" height="19" fill="url(#h_yellow)"/>
<rect x="156.5" y="775.5" width="10" height="18" fill="none" stroke="#d8d040" stroke-width="1"/>
<rect x="168" y="775" width="11" height="19" fill="url(#h_yellow)"/>
<rect x="168.5" y="775.5" width="10" height="18" fill="none" stroke="#ffffff" stroke-opacity="0.25" stroke-width="1"/>
<g><circle cx="91.5" cy="784.8" r="5.9" fill="none" stroke="#5a5a50" stroke-width="1.2" stroke-dasharray="0.9 1.4" opacity="0.55"/><circle cx="91.5" cy="784.8" r="4.6" fill="url(#gball)"/></g>
<rect x="82" y="795" width="85" height="12" fill="#6b6573"/>
<rect x="168" y="795" width="11" height="11" fill="#7ccc7c"/><path d="M171.8,798 L176.6,799.9 L173.4,801.3 L173.4,803 L171.8,803 Z" fill="#000"/>
<text x="114.9" y="803.6" textLength="48.4" lengthAdjust="spacingAndGlyphs" style="font-family:&quot;Liberation Sans&quot;,sans-serif;font-size:9.6px" fill="#d2d2d2">smokecolor</text>
<rect x="82" y="807" width="85" height="12" fill="#6b6573"/>
<rect x="168" y="807" width="11" height="11" fill="#78b4d4"/><path d="M171.8,810 L176.6,811.9 L173.4,813.3 L173.4,815 L171.8,815 Z" fill="#000"/>
<text x="84.1" y="815.6" textLength="79.2" lengthAdjust="spacingAndGlyphs" style="font-family:&quot;Liberation Sans&quot;,sans-serif;font-size:9.6px" fill="#d2d2d2">bound_smokecolor</text>
<rect x="238" y="756" width="61" height="19" fill="url(#h_yellow)"/>
<rect x="300" y="756" width="11" height="19" fill="url(#h_yellow)"/>
<rect x="300.5" y="756.5" width="10" height="18" fill="none" stroke="#a8d4e0" stroke-width="1"/>
<rect x="312" y="756" width="11" height="19" fill="url(#h_yellow)"/>
<rect x="312.5" y="756.5" width="10" height="18" fill="none" stroke="#d8d040" stroke-width="1"/>
<rect x="324" y="756" width="11" height="19" fill="url(#h_yellow)"/>
<rect x="324.5" y="756.5" width="10" height="18" fill="none" stroke="#ffffff" stroke-opacity="0.25" stroke-width="1"/>
<g><circle cx="247.5" cy="765.8" r="5.9" fill="none" stroke="#5a5a50" stroke-width="1.2" stroke-dasharray="0.9 1.4" opacity="0.55"/><circle cx="247.5" cy="765.8" r="4.6" fill="url(#gball)"/></g>
<rect x="238" y="776" width="85" height="12" fill="#6b6573"/>
<rect x="324" y="776" width="11" height="11" fill="#78b496"/><path d="M327.8,779 L332.6,780.9 L329.4,782.3 L329.4,784 L327.8,784 Z" fill="#000"/>
<text x="308.4" y="784.6" textLength="10.9" lengthAdjust="spacingAndGlyphs" style="font-family:&quot;Liberation Sans&quot;,sans-serif;font-size:9.6px" fill="#d2d2d2">Kd</text>
<rect x="238" y="788" width="85" height="12" fill="#6b6573"/>
<rect x="324" y="788" width="11" height="11" fill="#78b4d4"/><path d="M327.8,791 L332.6,792.9 L329.4,794.3 L329.4,796 L327.8,796 Z" fill="#000"/>
<text x="277.6" y="796.6" textLength="41.7" lengthAdjust="spacingAndGlyphs" style="font-family:&quot;Liberation Sans&quot;,sans-serif;font-size:9.6px" fill="#d2d2d2">bound_Kd</text>
<rect x="442" y="483" width="61" height="19" fill="url(#h_purple2)"/>
<rect x="504" y="483" width="11" height="19" fill="url(#h_purple2)"/>
<rect x="504.5" y="483.5" width="10" height="18" fill="none" stroke="#a8d4e0" stroke-width="1"/>
<rect x="516" y="483" width="11" height="19" fill="url(#h_purple2)"/>
<rect x="516.5" y="483.5" width="10" height="18" fill="none" stroke="#d8d040" stroke-width="1"/>
<rect x="528" y="483" width="11" height="19" fill="url(#h_purple2)"/>
<rect x="528.5" y="483.5" width="10" height="18" fill="none" stroke="#ffffff" stroke-opacity="0.25" stroke-width="1"/>
<g><circle cx="451.5" cy="492.8" r="5.9" fill="none" stroke="#5a5a50" stroke-width="1.2" stroke-dasharray="0.9 1.4" opacity="0.55"/><circle cx="451.5" cy="492.8" r="4.6" fill="url(#gball)"/></g>
<rect x="442" y="503" width="85" height="12" fill="#6b6573"/>
<rect x="528" y="503" width="11" height="11" fill="#78b496"/><path d="M531.8,506 L536.6,507.9 L533.4,509.3 L533.4,511 L531.8,511 Z" fill="#000"/>
<text x="492.3" y="511.6" textLength="31.0" lengthAdjust="spacingAndGlyphs" style="font-family:&quot;Liberation Sans&quot;,sans-serif;font-size:9.6px" fill="#d2d2d2">density</text>
<rect x="442" y="515" width="85" height="12" fill="#6b6573"/>
<rect x="528" y="515" width="11" height="11" fill="#78b4d4"/><path d="M531.8,518 L536.6,519.9 L533.4,521.3 L533.4,523 L531.8,523 Z" fill="#000"/>
<text x="461.5" y="523.6" textLength="61.8" lengthAdjust="spacingAndGlyphs" style="font-family:&quot;Liberation Sans&quot;,sans-serif;font-size:9.6px" fill="#d2d2d2">bound_density</text>
<rect x="385" y="549" width="61" height="19" fill="url(#h_gray)"/>
<rect x="447" y="549" width="11" height="19" fill="url(#h_gray)"/>
<rect x="447.5" y="549.5" width="10" height="18" fill="none" stroke="#a8d4e0" stroke-width="1"/>
<rect x="459" y="549" width="11" height="19" fill="url(#h_gray)"/>
<rect x="459.5" y="549.5" width="10" height="18" fill="none" stroke="#d8d040" stroke-width="1"/>
<rect x="471" y="549" width="11" height="19" fill="url(#h_gray)"/>
<rect x="471.5" y="549.5" width="10" height="18" fill="none" stroke="#ffffff" stroke-opacity="0.25" stroke-width="1"/>
<path d="M390.3,554.3 L398.7,562.7 M398.7,554.3 L390.3,562.7" stroke="#000" stroke-width="3.1" stroke-linecap="round"/>
<rect x="397" y="569" width="73" height="12" fill="#6b6573"/>
<rect x="385" y="569" width="11" height="11" fill="#7ccc7c"/><path d="M388.8,572 L393.6,573.9 L390.4,575.3 L390.4,577 L388.8,577 Z" fill="#000"/>
<text x="400.5" y="577.6" textLength="27.1" lengthAdjust="spacingAndGlyphs" style="font-family:&quot;Liberation Sans&quot;,sans-serif;font-size:9.6px" fill="#d2d2d2">input1</text>
<rect x="471" y="569" width="11" height="11" fill="#7ccc7c"/><path d="M474.8,572 L479.6,573.9 L476.4,575.3 L476.4,577 L474.8,577 Z" fill="#000"/>
<text x="439.1" y="577.6" textLength="27.2" lengthAdjust="spacingAndGlyphs" style="font-family:&quot;Liberation Sans&quot;,sans-serif;font-size:9.6px" fill="#d2d2d2">prod...</text>
<rect x="397" y="581" width="85" height="12" fill="#6b6573"/>
<rect x="385" y="581" width="11" height="11" fill="#7ccc7c"/><path d="M388.8,584 L393.6,585.9 L390.4,587.3 L390.4,589 L388.8,589 Z" fill="#000"/>
<text x="400.5" y="589.6" textLength="27.1" lengthAdjust="spacingAndGlyphs" style="font-family:&quot;Liberation Sans&quot;,sans-serif;font-size:9.6px" fill="#d2d2d2">input2</text>
<rect x="397" y="593" width="85" height="13" fill="#6b6573"/>
<rect x="385" y="593" width="11" height="11" fill="#7ccc7c"/><path d="M388.8,596 L393.6,597.9 L390.4,599.3 L390.4,601 L388.8,601 Z" fill="#000"/>
<text x="400.5" y="601.6" textLength="27.1" lengthAdjust="spacingAndGlyphs" style="font-family:&quot;Liberation Sans&quot;,sans-serif;font-size:9.6px" fill="#d2d2d2">input3</text>
<rect x="397" y="606" width="85" height="12" fill="#6b6573"/>
<rect x="385" y="606" width="11" height="11" fill="#78b496"/><path d="M388.8,609 L393.6,610.9 L390.4,612.3 L390.4,614 L388.8,614 Z" fill="#000"/>
<text x="400.5" y="614.6" textLength="27.1" lengthAdjust="spacingAndGlyphs" style="font-family:&quot;Liberation Sans&quot;,sans-serif;font-size:9.6px" fill="#d2d2d2">input4</text>
<rect x="397" y="618" width="85" height="12" fill="#6b6573"/>
<rect x="385" y="618" width="11" height="11" fill="#e6e6e6"/><path d="M388.8,621 L393.6,622.9 L390.4,624.3 L390.4,626 L388.8,626 Z" fill="#000"/>
<text x="400.5" y="626.6" textLength="27.1" lengthAdjust="spacingAndGlyphs" style="font-family:&quot;Liberation Sans&quot;,sans-serif;font-size:9.6px" fill="#d2d2d2">input5</text>
<rect x="521" y="720" width="61" height="19" fill="url(#h_yellow)"/>
<rect x="583" y="720" width="11" height="19" fill="url(#h_yellow)"/>
<rect x="583.5" y="720.5" width="10" height="18" fill="none" stroke="#a8d4e0" stroke-width="1"/>
<rect x="595" y="720" width="11" height="19" fill="url(#h_yellow)"/>
<rect x="595.5" y="720.5" width="10" height="18" fill="none" stroke="#d8d040" stroke-width="1"/>
<rect x="607" y="720" width="11" height="19" fill="url(#h_yellow)"/>
<rect x="607.5" y="720.5" width="10" height="18" fill="none" stroke="#ffffff" stroke-opacity="0.25" stroke-width="1"/>
<g><circle cx="530.5" cy="729.8" r="5.9" fill="none" stroke="#5a5a50" stroke-width="1.2" stroke-dasharray="0.9 1.4" opacity="0.55"/><circle cx="530.5" cy="729.8" r="4.6" fill="url(#gball)"/></g>
<rect x="521" y="740" width="85" height="12" fill="#6b6573"/>
<rect x="607" y="740" width="11" height="11" fill="#78b496"/><path d="M610.8,743 L615.6,744.9 L612.4,746.3 L612.4,748 L610.8,748 Z" fill="#000"/>
<text x="543.7" y="748.6" textLength="58.6" lengthAdjust="spacingAndGlyphs" style="font-family:&quot;Liberation Sans&quot;,sans-serif;font-size:9.6px" fill="#d2d2d2">smokedensity</text>
<rect x="521" y="752" width="85" height="12" fill="#6b6573"/>
<rect x="607" y="752" width="11" height="11" fill="#78b4d4"/><path d="M610.8,755 L615.6,756.9 L612.4,758.3 L612.4,760 L610.8,760 Z" fill="#000"/>
<text x="525.3" y="760.6" textLength="77.0" lengthAdjust="spacingAndGlyphs" style="font-family:&quot;Liberation Sans&quot;,sans-serif;font-size:9.6px" fill="#d2d2d2">bound_smokede...</text>
<rect x="385" y="840" width="61" height="19" fill="url(#h_gray)"/>
<rect x="447" y="840" width="11" height="19" fill="url(#h_gray)"/>
<rect x="447.5" y="840.5" width="10" height="18" fill="none" stroke="#a8d4e0" stroke-width="1"/>
<rect x="459" y="840" width="11" height="19" fill="url(#h_gray)"/>
<rect x="459.5" y="840.5" width="10" height="18" fill="none" stroke="#d8d040" stroke-width="1"/>
<rect x="471" y="840" width="11" height="19" fill="url(#h_gray)"/>
<rect x="471.5" y="840.5" width="10" height="18" fill="none" stroke="#ffffff" stroke-opacity="0.25" stroke-width="1"/>
<rect x="388.6" y="844.6" width="12" height="8" rx="1.2" fill="url(#gramp)" stroke="#2a1a10" stroke-width="1.1"/><rect x="388.4" y="853.9" width="12.6" height="1.6" fill="#222"/><path d="M390.2,854 l1.3,-2 l1.3,2 Z M396.6,854 l1.3,-2 l1.3,2 Z" fill="#f0d8b0"/>
<rect x="397" y="860" width="73" height="12" fill="#6b6573"/>
<rect x="385" y="860" width="11" height="11" fill="#78b496"/><path d="M388.8,863 L393.6,864.9 L390.4,866.3 L390.4,868 L388.8,868 Z" fill="#000"/>
<text x="400.5" y="868.6" textLength="21.7" lengthAdjust="spacingAndGlyphs" style="font-family:&quot;Liberation Sans&quot;,sans-serif;font-size:9.6px" fill="#d2d2d2">input</text>
<rect x="471" y="860" width="11" height="11" fill="#7ccc7c"/><path d="M474.8,863 L479.6,864.9 L476.4,866.3 L476.4,868 L474.8,868 Z" fill="#000"/>
<text x="437.9" y="868.6" textLength="28.4" lengthAdjust="spacingAndGlyphs" style="font-family:&quot;Liberation Sans&quot;,sans-serif;font-size:9.6px" fill="#d2d2d2">dens...</text>
<rect x="385" y="872" width="85" height="12" fill="#6b6573"/>
<rect x="471" y="872" width="11" height="11" fill="#b4a898"/><path d="M474.8,875 L479.6,876.9 L476.4,878.3 L476.4,880 L474.8,880 Z" fill="#000"/>
<text x="437.9" y="880.6" textLength="28.4" lengthAdjust="spacingAndGlyphs" style="font-family:&quot;Liberation Sans&quot;,sans-serif;font-size:9.6px" fill="#d2d2d2">dens...</text>
<rect x="385" y="884" width="85" height="13" fill="#6b6573"/>
<rect x="471" y="884" width="11" height="11" fill="#7c9888"/><path d="M474.8,887 L479.6,888.9 L476.4,890.3 L476.4,892 L474.8,892 Z" fill="#000"/>
<text x="437.9" y="892.6" textLength="28.4" lengthAdjust="spacingAndGlyphs" style="font-family:&quot;Liberation Sans&quot;,sans-serif;font-size:9.6px" fill="#d2d2d2">dens...</text>
<rect x="385" y="897" width="85" height="12" fill="#6b6573"/>
<rect x="471" y="897" width="11" height="11" fill="#80a880"/><path d="M474.8,900 L479.6,901.9 L476.4,903.3 L476.4,905 L474.8,905 Z" fill="#000"/>
<text x="437.9" y="905.6" textLength="28.4" lengthAdjust="spacingAndGlyphs" style="font-family:&quot;Liberation Sans&quot;,sans-serif;font-size:9.6px" fill="#d2d2d2">dens...</text>
<rect x="385" y="909" width="85" height="12" fill="#6b6573"/>
<rect x="471" y="909" width="11" height="11" fill="#d8bca0"/><path d="M474.8,912 L479.6,913.9 L476.4,915.3 L476.4,917 L474.8,917 Z" fill="#000"/>
<text x="437.9" y="917.6" textLength="28.4" lengthAdjust="spacingAndGlyphs" style="font-family:&quot;Liberation Sans&quot;,sans-serif;font-size:9.6px" fill="#d2d2d2">dens...</text>
<rect x="385" y="921" width="85" height="12" fill="#6b6573"/>
<rect x="471" y="921" width="11" height="11" fill="#4a68d8"/><path d="M474.8,924 L479.6,925.9 L476.4,927.3 L476.4,929 L474.8,929 Z" fill="#000"/>
<text x="437.9" y="929.6" textLength="28.4" lengthAdjust="spacingAndGlyphs" style="font-family:&quot;Liberation Sans&quot;,sans-serif;font-size:9.6px" fill="#d2d2d2">dens...</text>
<rect x="614" y="873" width="61" height="19" fill="url(#h_gray)"/>
<rect x="676" y="873" width="11" height="19" fill="url(#h_gray)"/>
<rect x="676.5" y="873.5" width="10" height="18" fill="none" stroke="#a8d4e0" stroke-width="1"/>
<rect x="688" y="873" width="11" height="19" fill="url(#h_gray)"/>
<rect x="688.5" y="873.5" width="10" height="18" fill="none" stroke="#d8d040" stroke-width="1"/>
<rect x="700" y="873" width="11" height="19" fill="url(#h_gray)"/>
<rect x="700.5" y="873.5" width="10" height="18" fill="none" stroke="#ffffff" stroke-opacity="0.25" stroke-width="1"/>
<rect x="617.6" y="877.6" width="12" height="8" rx="1.2" fill="url(#gramp)" stroke="#2a1a10" stroke-width="1.1"/><rect x="617.4" y="886.9" width="12.6" height="1.6" fill="#222"/><path d="M619.2,887 l1.3,-2 l1.3,2 Z M625.6,887 l1.3,-2 l1.3,2 Z" fill="#f0d8b0"/>
<rect x="626" y="893" width="73" height="12" fill="#6b6573"/>
<rect x="614" y="893" width="11" height="11" fill="#78b496"/><path d="M617.8,896 L622.6,897.9 L619.4,899.3 L619.4,901 L617.8,901 Z" fill="#000"/>
<text x="629.5" y="901.6" textLength="21.7" lengthAdjust="spacingAndGlyphs" style="font-family:&quot;Liberation Sans&quot;,sans-serif;font-size:9.6px" fill="#d2d2d2">input</text>
<rect x="700" y="893" width="11" height="11" fill="#7ccc7c"/><path d="M703.8,896 L708.6,897.9 L705.4,899.3 L705.4,901 L703.8,901 Z" fill="#000"/>
<text x="665.1" y="901.6" textLength="30.2" lengthAdjust="spacingAndGlyphs" style="font-family:&quot;Liberation Sans&quot;,sans-serif;font-size:9.6px" fill="#d2d2d2">temp...</text>
<rect x="614" y="905" width="85" height="12" fill="#6b6573"/>
<rect x="700" y="905" width="11" height="11" fill="#b4a898"/><path d="M703.8,908 L708.6,909.9 L705.4,911.3 L705.4,913 L703.8,913 Z" fill="#000"/>
<text x="665.1" y="913.6" textLength="30.2" lengthAdjust="spacingAndGlyphs" style="font-family:&quot;Liberation Sans&quot;,sans-serif;font-size:9.6px" fill="#d2d2d2">temp...</text>
<rect x="614" y="917" width="85" height="13" fill="#6b6573"/>
<rect x="700" y="917" width="11" height="11" fill="#7c9888"/><path d="M703.8,920 L708.6,921.9 L705.4,923.3 L705.4,925 L703.8,925 Z" fill="#000"/>
<text x="665.1" y="925.6" textLength="30.2" lengthAdjust="spacingAndGlyphs" style="font-family:&quot;Liberation Sans&quot;,sans-serif;font-size:9.6px" fill="#d2d2d2">temp...</text>
<rect x="614" y="930" width="85" height="12" fill="#6b6573"/>
<rect x="700" y="930" width="11" height="11" fill="#80a880"/><path d="M703.8,933 L708.6,934.9 L705.4,936.3 L705.4,938 L703.8,938 Z" fill="#000"/>
<text x="665.1" y="938.6" textLength="30.2" lengthAdjust="spacingAndGlyphs" style="font-family:&quot;Liberation Sans&quot;,sans-serif;font-size:9.6px" fill="#d2d2d2">temp...</text>
<rect x="614" y="942" width="85" height="12" fill="#6b6573"/>
<rect x="700" y="942" width="11" height="11" fill="#d8bca0"/><path d="M703.8,945 L708.6,946.9 L705.4,948.3 L705.4,950 L703.8,950 Z" fill="#000"/>
<text x="665.1" y="950.6" textLength="30.2" lengthAdjust="spacingAndGlyphs" style="font-family:&quot;Liberation Sans&quot;,sans-serif;font-size:9.6px" fill="#d2d2d2">temp...</text>
<rect x="614" y="954" width="85" height="12" fill="#6b6573"/>
<rect x="700" y="954" width="11" height="11" fill="#4a68d8"/><path d="M703.8,957 L708.6,958.9 L705.4,960.3 L705.4,962 L703.8,962 Z" fill="#000"/>
<text x="665.1" y="962.6" textLength="30.2" lengthAdjust="spacingAndGlyphs" style="font-family:&quot;Liberation Sans&quot;,sans-serif;font-size:9.6px" fill="#d2d2d2">temp...</text>
<rect x="836" y="898" width="61" height="19" fill="url(#h_gray)"/>
<rect x="898" y="898" width="11" height="19" fill="url(#h_gray)"/>
<rect x="898.5" y="898.5" width="10" height="18" fill="none" stroke="#a8d4e0" stroke-width="1"/>
<rect x="910" y="898" width="11" height="19" fill="url(#h_gray)"/>
<rect x="910.5" y="898.5" width="10" height="18" fill="none" stroke="#d8d040" stroke-width="1"/>
<rect x="922" y="898" width="11" height="19" fill="url(#h_gray)"/>
<rect x="922.5" y="898.5" width="10" height="18" fill="none" stroke="#ffffff" stroke-opacity="0.25" stroke-width="1"/>
<path d="M841.3,903.3 L849.7,911.7 M849.7,903.3 L841.3,911.7" stroke="#000" stroke-width="3.1" stroke-linecap="round"/>
<rect x="848" y="918" width="73" height="12" fill="#6b6573"/>
<rect x="836" y="918" width="11" height="11" fill="#7ccc7c"/><path d="M839.8,921 L844.6,922.9 L841.4,924.3 L841.4,926 L839.8,926 Z" fill="#000"/>
<text x="851.5" y="926.6" textLength="27.1" lengthAdjust="spacingAndGlyphs" style="font-family:&quot;Liberation Sans&quot;,sans-serif;font-size:9.6px" fill="#d2d2d2">input1</text>
<rect x="922" y="918" width="11" height="11" fill="#7ccc7c"/><path d="M925.8,921 L930.6,922.9 L927.4,924.3 L927.4,926 L925.8,926 Z" fill="#000"/>
<text x="890.1" y="926.6" textLength="27.2" lengthAdjust="spacingAndGlyphs" style="font-family:&quot;Liberation Sans&quot;,sans-serif;font-size:9.6px" fill="#d2d2d2">prod...</text>
<rect x="848" y="930" width="85" height="12" fill="#6b6573"/>
<rect x="836" y="930" width="11" height="11" fill="#78b496"/><path d="M839.8,933 L844.6,934.9 L841.4,936.3 L841.4,938 L839.8,938 Z" fill="#000"/>
<text x="851.5" y="938.6" textLength="27.1" lengthAdjust="spacingAndGlyphs" style="font-family:&quot;Liberation Sans&quot;,sans-serif;font-size:9.6px" fill="#d2d2d2">input2</text>
<rect x="848" y="942" width="85" height="13" fill="#6b6573"/>
<rect x="836" y="942" width="11" height="11" fill="#e6e6e6"/><path d="M839.8,945 L844.6,946.9 L841.4,948.3 L841.4,950 L839.8,950 Z" fill="#000"/>
<text x="851.5" y="950.6" textLength="27.1" lengthAdjust="spacingAndGlyphs" style="font-family:&quot;Liberation Sans&quot;,sans-serif;font-size:9.6px" fill="#d2d2d2">input3</text>
<rect x="211" y="1000" width="61" height="19" fill="url(#h_purple2)"/>
<rect x="273" y="1000" width="11" height="19" fill="url(#h_purple2)"/>
<rect x="273.5" y="1000.5" width="10" height="18" fill="none" stroke="#a8d4e0" stroke-width="1"/>
<rect x="285" y="1000" width="11" height="19" fill="url(#h_purple2)"/>
<rect x="285.5" y="1000.5" width="10" height="18" fill="none" stroke="#d8d040" stroke-width="1"/>
<rect x="297" y="1000" width="11" height="19" fill="url(#h_purple2)"/>
<rect x="297.5" y="1000.5" width="10" height="18" fill="none" stroke="#ffffff" stroke-opacity="0.25" stroke-width="1"/>
<g><circle cx="220.5" cy="1009.8" r="5.9" fill="none" stroke="#5a5a50" stroke-width="1.2" stroke-dasharray="0.9 1.4" opacity="0.55"/><circle cx="220.5" cy="1009.8" r="4.6" fill="url(#gball)"/></g>
<rect x="211" y="1020" width="85" height="12" fill="#6b6573"/>
<rect x="297" y="1020" width="11" height="11" fill="#78b496"/><path d="M300.8,1023 L305.6,1024.9 L302.4,1026.3 L302.4,1028 L300.8,1028 Z" fill="#000"/>
<text x="261.3" y="1028.6" textLength="31.0" lengthAdjust="spacingAndGlyphs" style="font-family:&quot;Liberation Sans&quot;,sans-serif;font-size:9.6px" fill="#d2d2d2">density</text>
<rect x="211" y="1032" width="85" height="12" fill="#6b6573"/>
<rect x="297" y="1032" width="11" height="11" fill="#78b4d4"/><path d="M300.8,1035 L305.6,1036.9 L302.4,1038.3 L302.4,1040 L300.8,1040 Z" fill="#000"/>
<text x="230.5" y="1040.6" textLength="61.8" lengthAdjust="spacingAndGlyphs" style="font-family:&quot;Liberation Sans&quot;,sans-serif;font-size:9.6px" fill="#d2d2d2">bound_density</text>
<rect x="839" y="788" width="61" height="19" fill="url(#h_yellow)"/>
<rect x="901" y="788" width="11" height="19" fill="url(#h_yellow)"/>
<rect x="901.5" y="788.5" width="10" height="18" fill="none" stroke="#a8d4e0" stroke-width="1"/>
<rect x="913" y="788" width="11" height="19" fill="url(#h_yellow)"/>
<rect x="913.5" y="788.5" width="10" height="18" fill="none" stroke="#d8d040" stroke-width="1"/>
<rect x="925" y="788" width="11" height="19" fill="url(#h_yellow)"/>
<rect x="925.5" y="788.5" width="10" height="18" fill="none" stroke="#ffffff" stroke-opacity="0.25" stroke-width="1"/>
<g><circle cx="848.5" cy="797.8" r="5.9" fill="none" stroke="#5a5a50" stroke-width="1.2" stroke-dasharray="0.9 1.4" opacity="0.55"/><circle cx="848.5" cy="797.8" r="4.6" fill="url(#gball)"/></g>
<rect x="839" y="808" width="85" height="12" fill="#6b6573"/>
<rect x="925" y="808" width="11" height="11" fill="#78b496"/><path d="M928.8,811 L933.6,812.9 L930.4,814.3 L930.4,816 L928.8,816 Z" fill="#000"/>
<text x="882.8" y="816.6" textLength="37.5" lengthAdjust="spacingAndGlyphs" style="font-family:&quot;Liberation Sans&quot;,sans-serif;font-size:9.6px" fill="#d2d2d2">emission</text>
<rect x="839" y="820" width="85" height="12" fill="#6b6573"/>
<rect x="925" y="820" width="11" height="11" fill="#78b4d4"/><path d="M928.8,823 L933.6,824.9 L930.4,826.3 L930.4,828 L928.8,828 Z" fill="#000"/>
<text x="852.0" y="828.6" textLength="68.3" lengthAdjust="spacingAndGlyphs" style="font-family:&quot;Liberation Sans&quot;,sans-serif;font-size:9.6px" fill="#d2d2d2">bound_emission</text>
<rect x="1101" y="622" width="61" height="19" fill="url(#h_gray)"/>
<rect x="1163" y="622" width="11" height="19" fill="url(#h_gray)"/>
<rect x="1163.5" y="622.5" width="10" height="18" fill="none" stroke="#a8d4e0" stroke-width="1"/>
<rect x="1175" y="622" width="11" height="19" fill="url(#h_gray)"/>
<rect x="1175.5" y="622.5" width="10" height="18" fill="none" stroke="#d8d040" stroke-width="1"/>
<rect x="1187" y="622" width="11" height="19" fill="url(#h_gray)"/>
<rect x="1187.5" y="622.5" width="10" height="18" fill="none" stroke="#ffffff" stroke-opacity="0.25" stroke-width="1"/>

<rect x="1113" y="642" width="73" height="12" fill="#6b6573"/>
<rect x="1101" y="642" width="11" height="11" fill="#78b496"/><path d="M1104.8,645 L1109.6,646.9 L1106.4,648.3 L1106.4,650 L1104.8,650 Z" fill="#000"/>
<text x="1116.5" y="650.6" textLength="31.0" lengthAdjust="spacingAndGlyphs" style="font-family:&quot;Liberation Sans&quot;,sans-serif;font-size:9.6px" fill="#d2d2d2">density</text>
<rect x="1187" y="642" width="11" height="11" fill="#7ccc7c"/><path d="M1190.8,645 L1195.6,646.9 L1192.4,648.3 L1192.4,650 L1190.8,650 Z" fill="#000"/>
<text x="1173.4" y="650.6" textLength="8.9" lengthAdjust="spacingAndGlyphs" style="font-family:&quot;Liberation Sans&quot;,sans-serif;font-size:9.6px" fill="#d2d2d2">Cf</text>
<rect x="1113" y="654" width="73" height="12" fill="#6b6573"/>
<rect x="1101" y="654" width="11" height="11" fill="#78b496"/><path d="M1104.8,657 L1109.6,658.9 L1106.4,660.3 L1106.4,662 L1104.8,662 Z" fill="#000"/>
<text x="1116.5" y="662.6" textLength="30.7" lengthAdjust="spacingAndGlyphs" style="font-family:&quot;Liberation Sans&quot;,sans-serif;font-size:9.6px" fill="#d2d2d2">densi...</text>
<rect x="1187" y="654" width="11" height="11" fill="#78b496"/><path d="M1190.8,657 L1195.6,658.9 L1192.4,660.3 L1192.4,662 L1190.8,662 Z" fill="#000"/>
<text x="1172.7" y="662.6" textLength="9.6" lengthAdjust="spacingAndGlyphs" style="font-family:&quot;Liberation Sans&quot;,sans-serif;font-size:9.6px" fill="#d2d2d2">Of</text>
<rect x="1113" y="666" width="73" height="13" fill="#6b6573"/>
<rect x="1101" y="666" width="11" height="11" fill="#78b496"/><path d="M1104.8,669 L1109.6,670.9 L1106.4,672.3 L1106.4,674 L1104.8,674 Z" fill="#000"/>
<text x="1116.5" y="674.6" textLength="28.4" lengthAdjust="spacingAndGlyphs" style="font-family:&quot;Liberation Sans&quot;,sans-serif;font-size:9.6px" fill="#d2d2d2">shad...</text>
<rect x="1187" y="666" width="11" height="11" fill="#e8e27c"/><path d="M1190.8,669 L1195.6,670.9 L1192.4,672.3 L1192.4,674 L1190.8,674 Z" fill="#000"/>
<text x="1177.4" y="674.6" textLength="4.9" lengthAdjust="spacingAndGlyphs" style="font-family:&quot;Liberation Sans&quot;,sans-serif;font-size:9.6px" fill="#d2d2d2">F</text>
<rect x="1113" y="679" width="85" height="12" fill="#6b6573"/>
<rect x="1101" y="679" width="11" height="11" fill="#78b496"/><path d="M1104.8,682 L1109.6,683.9 L1106.4,685.3 L1106.4,687 L1104.8,687 Z" fill="#000"/>
<text x="1116.5" y="687.6" textLength="25.5" lengthAdjust="spacingAndGlyphs" style="font-family:&quot;Liberation Sans&quot;,sans-serif;font-size:9.6px" fill="#d2d2d2">phase</text>
<rect x="1113" y="691" width="85" height="12" fill="#6b6573"/>
<rect x="1101" y="691" width="11" height="11" fill="#78b496"/><path d="M1104.8,694 L1109.6,695.9 L1106.4,697.3 L1106.4,699 L1104.8,699 Z" fill="#000"/>
<text x="1116.5" y="699.6" textLength="42.8" lengthAdjust="spacingAndGlyphs" style="font-family:&quot;Liberation Sans&quot;,sans-serif;font-size:9.6px" fill="#d2d2d2">smoke_int</text>
<rect x="1113" y="703" width="85" height="12" fill="#6b6573"/>
<rect x="1101" y="703" width="11" height="11" fill="#7ccc7c"/><path d="M1104.8,706 L1109.6,707.9 L1106.4,709.3 L1106.4,711 L1104.8,711 Z" fill="#000"/>
<text x="1116.5" y="711.6" textLength="42.3" lengthAdjust="spacingAndGlyphs" style="font-family:&quot;Liberation Sans&quot;,sans-serif;font-size:9.6px" fill="#d2d2d2">smoke_clr</text>
<rect x="1113" y="715" width="85" height="13" fill="#6b6573"/>
<rect x="1101" y="715" width="11" height="11" fill="#78b496"/><path d="M1104.8,718 L1109.6,719.9 L1106.4,721.3 L1106.4,723 L1104.8,723 Z" fill="#000"/>
<text x="1116.5" y="723.6" textLength="34.3" lengthAdjust="spacingAndGlyphs" style="font-family:&quot;Liberation Sans&quot;,sans-serif;font-size:9.6px" fill="#d2d2d2">emit_int</text>
<rect x="1113" y="728" width="85" height="12" fill="#6b6573"/>
<rect x="1101" y="728" width="11" height="11" fill="#7ccc7c"/><path d="M1104.8,731 L1109.6,732.9 L1106.4,734.3 L1106.4,736 L1104.8,736 Z" fill="#000"/>
<text x="1116.5" y="736.6" textLength="33.8" lengthAdjust="spacingAndGlyphs" style="font-family:&quot;Liberation Sans&quot;,sans-serif;font-size:9.6px" fill="#d2d2d2">emit_clr</text>
<rect x="1113" y="740" width="85" height="12" fill="#6b6573"/>
<rect x="1101" y="740" width="11" height="11" fill="#d8b49c"/><path d="M1104.8,743 L1109.6,744.9 L1106.4,746.3 L1106.4,748 L1104.8,748 Z" fill="#000"/>
<text x="1116.5" y="748.6" textLength="39.8" lengthAdjust="spacingAndGlyphs" style="font-family:&quot;Liberation Sans&quot;,sans-serif;font-size:9.6px" fill="#d2d2d2">signature</text>
<rect x="1432" y="609" width="61" height="19" fill="url(#h_gray)"/>
<rect x="1494" y="609" width="11" height="19" fill="url(#h_gray)"/>
<rect x="1494.5" y="609.5" width="10" height="18" fill="none" stroke="#a8d4e0" stroke-width="1"/>
<rect x="1506" y="609" width="11" height="19" fill="url(#h_gray)"/>
<rect x="1506.5" y="609.5" width="10" height="18" fill="none" stroke="#d8d040" stroke-width="1"/>
<rect x="1518" y="609" width="11" height="19" fill="url(#h_gray)"/>
<rect x="1518.5" y="609.5" width="10" height="18" fill="none" stroke="#ffffff" stroke-opacity="0.25" stroke-width="1"/>
<circle cx="1438" cy="614" r="1.3" fill="#303036" opacity="0.75"/><circle cx="1441" cy="618" r="1.5" fill="#303036" opacity="0.75"/><circle cx="1444.5" cy="617" r="1.3" fill="#303036" opacity="0.75"/><circle cx="1446" cy="620" r="1.2" fill="#303036" opacity="0.75"/><circle cx="1444" cy="622" r="1.3" fill="#303036" opacity="0.75"/><circle cx="1439" cy="617.5" r="1.1" fill="#303036" opacity="0.75"/><circle cx="1437.5" cy="620" r="1.0" fill="#303036" opacity="0.75"/><circle cx="1439.5" cy="623" r="0.8" fill="#303036" opacity="0.75"/><circle cx="1442" cy="614.5" r="0.9" fill="#303036" opacity="0.75"/><circle cx="1446.5" cy="615.5" r="0.8" fill="#303036" opacity="0.75"/>
<rect x="1444" y="629" width="73" height="12" fill="#6b6573"/>
<rect x="1432" y="629" width="11" height="11" fill="#7ccc7c"/><path d="M1435.8,632 L1440.6,633.9 L1437.4,635.3 L1437.4,637 L1435.8,637 Z" fill="#000"/>
<text x="1447.5" y="637.6" textLength="8.9" lengthAdjust="spacingAndGlyphs" style="font-family:&quot;Liberation Sans&quot;,sans-serif;font-size:9.6px" fill="#d2d2d2">Cf</text>
<rect x="1518" y="629" width="11" height="11" fill="#e8ae94"/><path d="M1521.8,632 L1526.6,633.9 L1523.4,635.3 L1523.4,637 L1521.8,637 Z" fill="#000"/>
<text x="1484.3" y="637.6" textLength="29.0" lengthAdjust="spacingAndGlyphs" style="font-family:&quot;Liberation Sans&quot;,sans-serif;font-size:9.6px" fill="#d2d2d2">shader</text>
<rect x="1444" y="641" width="85" height="12" fill="#6b6573"/>
<rect x="1432" y="641" width="11" height="11" fill="#7ccc7c"/><path d="M1435.8,644 L1440.6,645.9 L1437.4,647.3 L1437.4,649 L1435.8,649 Z" fill="#000"/>
<text x="1447.5" y="649.6" textLength="9.6" lengthAdjust="spacingAndGlyphs" style="font-family:&quot;Liberation Sans&quot;,sans-serif;font-size:9.6px" fill="#d2d2d2">Of</text>
<rect x="1444" y="653" width="85" height="13" fill="#6b6573"/>
<rect x="1432" y="653" width="11" height="11" fill="#78b496"/><path d="M1435.8,656 L1440.6,657.9 L1437.4,659.3 L1437.4,661 L1435.8,661 Z" fill="#000"/>
<text x="1447.5" y="661.6" textLength="8.5" lengthAdjust="spacingAndGlyphs" style="font-family:&quot;Liberation Sans&quot;,sans-serif;font-size:9.6px" fill="#d2d2d2">Af</text>
<rect x="1444" y="666" width="85" height="12" fill="#6b6573"/>
<rect x="1432" y="666" width="11" height="11" fill="#7ccc7c"/><path d="M1435.8,669 L1440.6,670.9 L1437.4,672.3 L1437.4,674 L1435.8,674 Z" fill="#000"/>
<text x="1447.5" y="674.6" textLength="6.3" lengthAdjust="spacingAndGlyphs" style="font-family:&quot;Liberation Sans&quot;,sans-serif;font-size:9.6px" fill="#d2d2d2">N</text>
<rect x="1444" y="678" width="85" height="12" fill="#6b6573"/>
<rect x="1432" y="678" width="11" height="11" fill="#e8e27c"/><path d="M1435.8,681 L1440.6,682.9 L1437.4,684.3 L1437.4,686 L1435.8,686 Z" fill="#000"/>
<text x="1447.5" y="686.6" textLength="4.9" lengthAdjust="spacingAndGlyphs" style="font-family:&quot;Liberation Sans&quot;,sans-serif;font-size:9.6px" fill="#d2d2d2">F</text>
<rect x="1651.5" y="607.5" width="100" height="46.5" fill="none" stroke="#ffffff" stroke-width="1"/>
<rect x="1653" y="609" width="61" height="19" fill="url(#h_gray)"/>
<rect x="1715" y="609" width="11" height="19" fill="url(#h_gray)"/>
<rect x="1715.5" y="609.5" width="10" height="18" fill="none" stroke="#a8d4e0" stroke-width="1"/>
<rect x="1727" y="609" width="11" height="19" fill="url(#h_gray)"/>
<rect x="1727.5" y="609.5" width="10" height="18" fill="none" stroke="#d8d040" stroke-width="1"/>
<rect x="1739" y="609" width="11" height="19" fill="url(#h_gray)"/>
<rect x="1739.5" y="609.5" width="10" height="18" fill="none" stroke="#ffffff" stroke-opacity="0.25" stroke-width="1"/>
<path d="M1656,617 q3,-3 5,0 q3,-3 5,0 M1658,621 l3,-3 l3,3" stroke="#6a6a6a" stroke-width="1" fill="none" opacity="0.8"/>
<rect x="1665" y="629" width="85" height="12" fill="#6b6573"/>
<rect x="1653" y="629" width="11" height="11" fill="#e8ae94"/><path d="M1656.8,632 L1661.6,633.9 L1658.4,635.3 L1658.4,637 L1656.8,637 Z" fill="#000"/>
<text x="1668.5" y="637.6" textLength="34.3" lengthAdjust="spacingAndGlyphs" style="font-family:&quot;Liberation Sans&quot;,sans-serif;font-size:9.6px" fill="#d2d2d2">shader1</text>
<rect x="1665" y="641" width="85" height="12" fill="#6b6573"/>
<rect x="1653" y="641" width="11" height="11" fill="#e6e6e6"/><path d="M1656.8,644 L1661.6,645.9 L1658.4,647.3 L1658.4,649 L1656.8,649 Z" fill="#000"/>
<text x="1668.5" y="649.6" textLength="34.3" lengthAdjust="spacingAndGlyphs" style="font-family:&quot;Liberation Sans&quot;,sans-serif;font-size:9.6px" fill="#d2d2d2">shader2</text>
<text x="550.7" y="171.9" textLength="132.5" lengthAdjust="spacingAndGlyphs" style="font-family:&quot;Liberation Sans&quot;,sans-serif;font-size:13.8px" fill="#c8c8c8">DoNoise (DoNoise)</text>
<text x="559.5" y="248.6" textLength="70.2" lengthAdjust="spacingAndGlyphs" style="font-family:&quot;Liberation Sans&quot;,sans-serif;font-size:13.8px" fill="#c8c8c8">const1 (1)</text>
<text x="786.5" y="212.7" textLength="75.5" lengthAdjust="spacingAndGlyphs" style="font-family:&quot;Liberation Sans&quot;,sans-serif;font-size:13.8px" fill="#a8a8f4">if_DoNoise</text>
<text x="81.3" y="416.5" textLength="211.7" lengthAdjust="spacingAndGlyphs" style="font-family:&quot;Liberation Sans&quot;,sans-serif;font-size:13.8px" fill="#c8c8c8">usePointColor (usePointColor)</text>
<text x="59.5" y="493.7" textLength="18.1" lengthAdjust="spacingAndGlyphs" style="font-family:&quot;Liberation Sans&quot;,sans-serif;font-size:13.8px" fill="#c8c8c8">Cd</text>
<text x="101.4" y="493.7" textLength="29.4" lengthAdjust="spacingAndGlyphs" style="font-family:&quot;Liberation Sans&quot;,sans-serif;font-size:13.8px" fill="#c8c8c8">(Cd)</text>
<text x="220.4" y="518.8" textLength="69.6" lengthAdjust="spacingAndGlyphs" style="font-family:&quot;Liberation Sans&quot;,sans-serif;font-size:13.8px" fill="#c8c8c8">chooseCd</text>
<text x="43.5" y="583.3" textLength="98.0" lengthAdjust="spacingAndGlyphs" style="font-family:&quot;Liberation Sans&quot;,sans-serif;font-size:13.8px" fill="#c8c8c8">white (1, 1, 1)</text>
<text x="219.3" y="614.3" textLength="86.0" lengthAdjust="spacingAndGlyphs" style="font-family:&quot;Liberation Sans&quot;,sans-serif;font-size:13.8px" fill="#c8c8c8">chooseBase</text>
<text x="46.6" y="686.5" textLength="237.3" lengthAdjust="spacingAndGlyphs" style="font-family:&quot;Liberation Sans&quot;,sans-serif;font-size:13.8px" fill="#c8c8c8">useSmokeColor (useSmokeColor)</text>
<text x="75.5" y="770.6" textLength="177.4" lengthAdjust="spacingAndGlyphs" style="font-family:&quot;Liberation Sans&quot;,sans-serif;font-size:13.8px" fill="#c8c8c8">smokecolor (smokecolor)</text>
<text x="231.4" y="751.6" textLength="17.8" lengthAdjust="spacingAndGlyphs" style="font-family:&quot;Liberation Sans&quot;,sans-serif;font-size:13.8px" fill="#c8c8c8">Kd</text>
<text x="273.2" y="751.6" textLength="29.2" lengthAdjust="spacingAndGlyphs" style="font-family:&quot;Liberation Sans&quot;,sans-serif;font-size:13.8px" fill="#c8c8c8">(Kd)</text>
<text x="435.5" y="478.7" textLength="119.2" lengthAdjust="spacingAndGlyphs" style="font-family:&quot;Liberation Sans&quot;,sans-serif;font-size:13.8px" fill="#c8c8c8">density (density)</text>
<text x="378.2" y="544.7" textLength="66.4" lengthAdjust="spacingAndGlyphs" style="font-family:&quot;Liberation Sans&quot;,sans-serif;font-size:13.8px" fill="#c8c8c8">multiply1</text>
<text x="514.4" y="715.7" textLength="213.7" lengthAdjust="spacingAndGlyphs" style="font-family:&quot;Liberation Sans&quot;,sans-serif;font-size:13.8px" fill="#c8c8c8">smokedensity (smokedensity)</text>
<text x="378.3" y="835.6" textLength="280.8" lengthAdjust="spacingAndGlyphs" style="font-family:&quot;Liberation Sans&quot;,sans-serif;font-size:13.8px" fill="#c8c8c8">density_color_ramp (densitycolorramp)</text>
<text x="607.4" y="868.8" textLength="205.0" lengthAdjust="spacingAndGlyphs" style="font-family:&quot;Liberation Sans&quot;,sans-serif;font-size:13.8px" fill="#c8c8c8">emmision_ramp (tempramp)</text>
<text x="829.6" y="893.6" textLength="66.3" lengthAdjust="spacingAndGlyphs" style="font-family:&quot;Liberation Sans&quot;,sans-serif;font-size:13.8px" fill="#c8c8c8">multiply2</text>
<text x="203.9" y="995.5" textLength="157.6" lengthAdjust="spacingAndGlyphs" style="font-family:&quot;Liberation Sans&quot;,sans-serif;font-size:13.8px" fill="#c8c8c8">temperature (density)</text>
<text x="832.6" y="783.6" textLength="141.0" lengthAdjust="spacingAndGlyphs" style="font-family:&quot;Liberation Sans&quot;,sans-serif;font-size:13.8px" fill="#c8c8c8">emission (emission)</text>
<text x="1094.3" y="617.9" textLength="106.3" lengthAdjust="spacingAndGlyphs" style="font-family:&quot;Liberation Sans&quot;,sans-serif;font-size:13.8px" fill="#52b6ec">volumemodel1</text>
<text x="1425.6" y="604.9" textLength="55.2" lengthAdjust="spacingAndGlyphs" style="font-family:&quot;Liberation Sans&quot;,sans-serif;font-size:13.8px" fill="#c8c8c8">output1</text>
<text x="1646.5" y="604.9" textLength="101.9" lengthAdjust="spacingAndGlyphs" style="font-family:&quot;Liberation Sans&quot;,sans-serif;font-size:13.8px" fill="#c8c8c8">output_collect</text>
<path d="M1094,672.5 h7" stroke="#78b496" stroke-width="1.5"/><circle cx="1093.5" cy="672.5" r="2.6" fill="#9ccab4"/>
</svg>
</body></html>
